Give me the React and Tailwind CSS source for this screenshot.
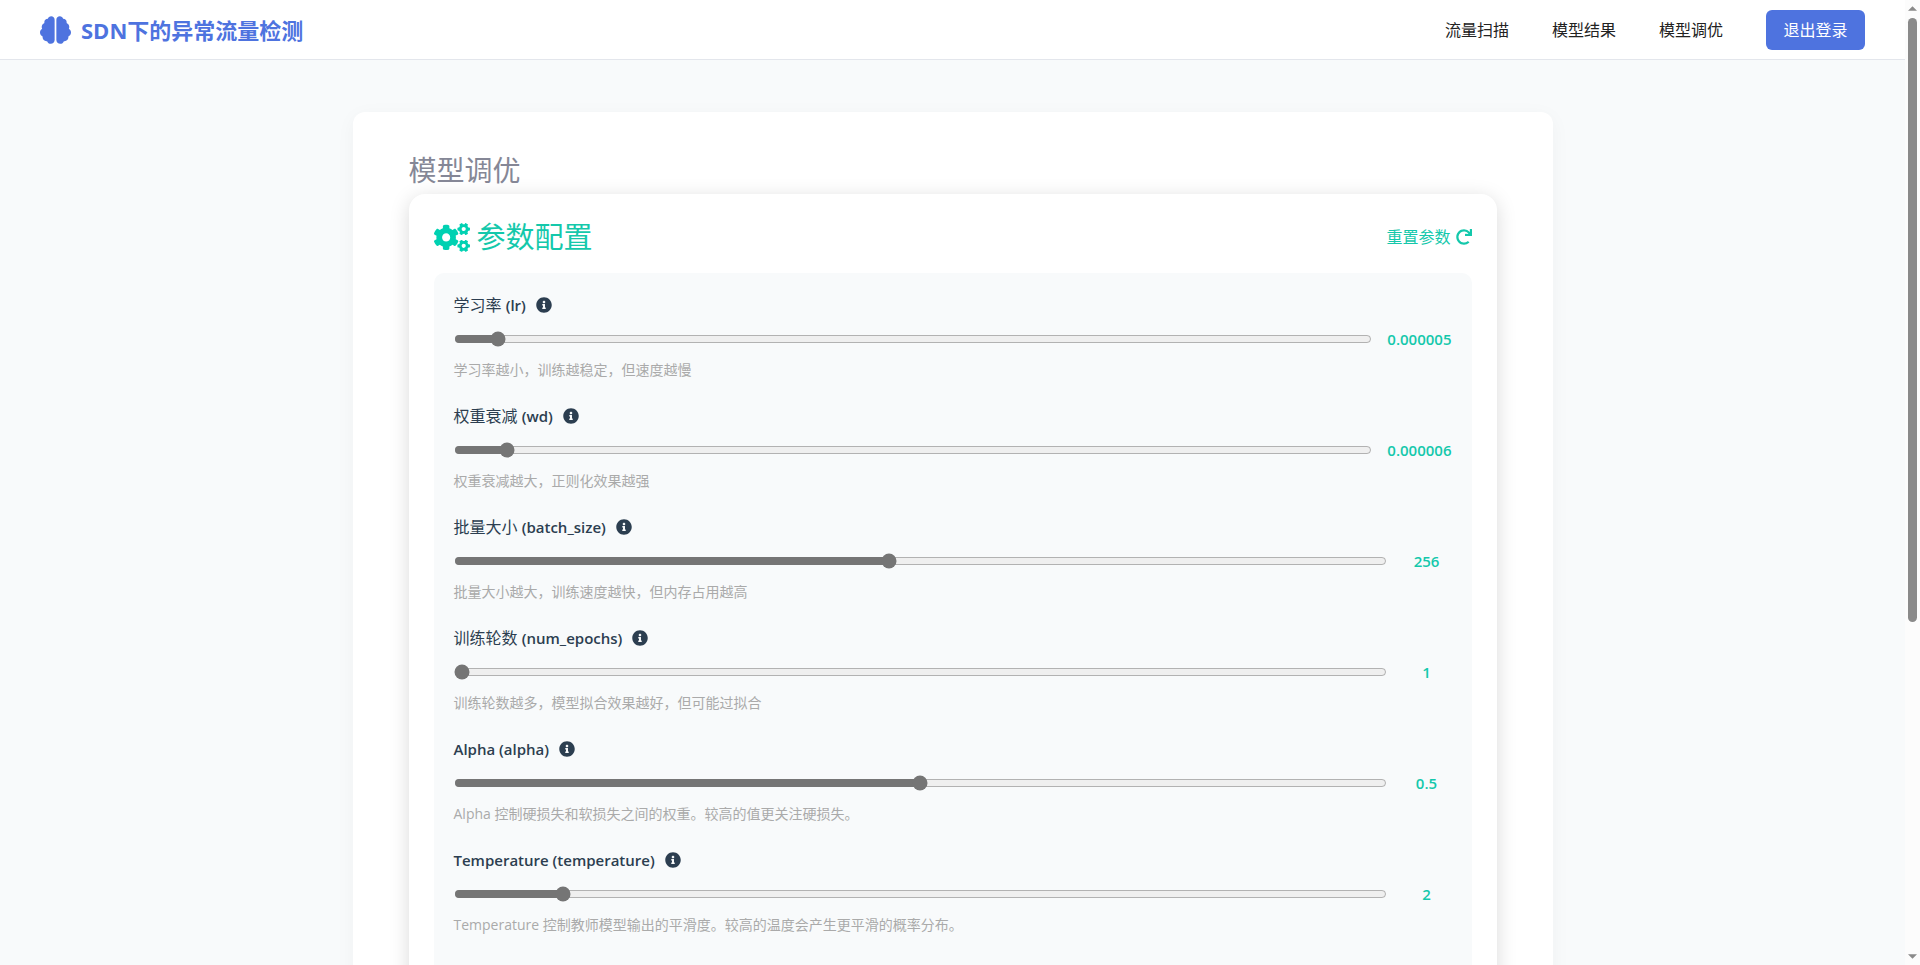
import { useState } from 'react';
import { FaBrain, FaCogs, FaInfoCircle, FaRedo } from 'react-icons/fa';

const PARAMS = [
    { key: 'lr', name: '学习率', value: 0.000005, min: 0.000001, max: 0.0001, step: 0.000001, digits: 6, hint: '学习率越小，训练越稳定，但速度越慢' },
    { key: 'wd', name: '权重衰减', value: 0.000006, min: 0.000001, max: 0.0001, step: 0.000001, digits: 6, hint: '权重衰减越大，正则化效果越强' },
    { key: 'batch_size', name: '批量大小', value: 256, min: 32, max: 512, step: 32, hint: '批量大小越大，训练速度越快，但内存占用越高' },
    { key: 'num_epochs', name: '训练轮数', value: 1, min: 1, max: 50, step: 1, hint: '训练轮数越多，模型拟合效果越好，但可能过拟合' },
    { key: 'alpha', name: 'Alpha', value: 0.5, min: 0, max: 1, step: 0.1, hint: 'Alpha 控制硬损失和软损失之间的权重。较高的值更关注硬损失。' },
    { key: 'temperature', name: 'Temperature', value: 2, min: 1, max: 10, step: 1, hint: 'Temperature 控制教师模型输出的平滑度。较高的温度会产生更平滑的概率分布。' },
];

const NAV_LINKS = ['流量扫描', '模型结果', '模型调优'];

const getDefaults = () => Object.fromEntries(PARAMS.map((p) => [p.key, p.value]));

function Navbar() {
    return (
        <header className="flex h-[60px] shrink-0 items-center justify-between border-b border-[#e3e6ec] bg-white px-10">
            <a href="#" className="flex items-center gap-[10px] text-[#4e73df]">
                <FaBrain className="h-[28px] w-[31px]" />
                <span className="text-[22px] font-bold leading-8">SDN下的异常流量检测</span>
            </a>
            <nav className="flex items-center gap-[43px] text-base text-[#222]">
                {NAV_LINKS.map((link) => (
                    <a key={link} href="#">{link}</a>
                ))}
                <button type="button" className="h-10 w-[99px] rounded-md bg-[#4e73df] text-white">
                    退出登录
                </button>
            </nav>
        </header>
    );
}

function ParamSlider({ param, value, onChange }) {
    return (
        <div className="mb-[23px]">
            <div className="flex h-6 items-center gap-[10px] text-[#2c3e50]">
                <label htmlFor={param.key} className="text-base leading-6">
                    {/^[A-Z]/.test(param.name) ? (
                        <span className="text-[15px] font-semibold">{param.name} ({param.key})</span>
                    ) : (
                        <>
                            {param.name} <span className="text-[15px] font-semibold">({param.key})</span>
                        </>
                    )}
                </label>
                <FaInfoCircle className="h-4 w-4" />
            </div>
            <div className="mt-[10px] flex h-6 items-center gap-[15px]">
                <input
                    id={param.key}
                    type="range"
                    className="min-w-0 flex-1 accent-[#757575]"
                    min={param.min}
                    max={param.max}
                    step={param.step}
                    value={value}
                    onChange={(e) => onChange(param.key, Number(e.target.value))}
                />
                <span className="min-w-[50px] text-center text-[15px] font-semibold text-[#14c8ab]">
                    {param.digits ? value.toFixed(param.digits) : value}
                </span>
            </div>
            <p className="mt-2 text-[14px] leading-[22px] text-[#aaa]">{param.hint}</p>
        </div>
    );
}

// Custom scroll rail on the right edge of the window
function ScrollRail() {
    return (
        <div className="flex w-[15px] shrink-0 flex-col items-center bg-[#fcfcfc] py-[6px]">
            <svg width="9" height="5" viewBox="0 0 10 5" fill="#8a8a8a"><path d="M5 0l5 5H0z" /></svg>
            <div className="mt-[7px] h-[604px] max-h-[64%] w-[9px] rounded-full bg-[#8a8a8a]" />
            <svg className="mt-auto" width="9" height="5" viewBox="0 0 10 5" fill="#8a8a8a"><path d="M0 0h10L5 5z" /></svg>
        </div>
    );
}

export default function App() {
    const [values, setValues] = useState(getDefaults);

    const handleChange = (key, value) => setValues((prev) => ({ ...prev, [key]: value }));

    return (
        <div className="flex h-screen overflow-hidden font-['Open_Sans','Noto_Sans_CJK_SC',sans-serif]">
            <div className="flex min-w-0 flex-1 flex-col bg-[#f8fafb]">
                <Navbar />
                <main className="min-h-0 flex-1 overflow-hidden pt-[52px]">
                    <section className="mx-auto max-w-[1200px] rounded-xl bg-white px-14 pb-14 pt-10 shadow-[0_4px_20px_rgba(0,0,0,0.04)]">
                        <h1 className="mb-[6px] text-[28px] leading-9 text-[#858796]">模型调优</h1>
                        <div className="rounded-2xl bg-white p-[25px] shadow-[0_4px_20px_rgba(0,0,0,0.15)]">
                            <div className="mb-[18px] flex h-9 items-center justify-between text-[#00d1b2]">
                                <h2 className="flex items-center gap-[7px] text-[29px] leading-9">
                                    <FaCogs className="h-[29px] w-[36px]" />
                                    <span className="text-[#14c8ab]">参数配置</span>
                                </h2>
                                <button type="button" className="flex items-center gap-[5px] text-base text-[#14c8ab]" onClick={() => setValues(getDefaults())}>
                                    重置参数
                                    <FaRedo className="h-4 w-4" />
                                </button>
                            </div>
                            <div className="rounded-[10px] bg-[#f8fafb] p-5">
                                {PARAMS.map((param) => (
                                    <ParamSlider key={param.key} param={param} value={values[param.key]} onChange={handleChange} />
                                ))}
                            </div>
                        </div>
                    </section>
                </main>
            </div>
            <ScrollRail />
        </div>
    );
}
